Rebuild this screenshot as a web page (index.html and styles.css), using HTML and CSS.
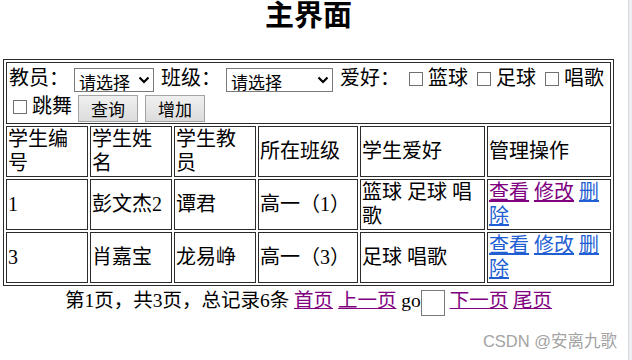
FILE: index.html
```html
<!DOCTYPE html>
<html lang="zh-CN">
<head>
  <meta charset="UTF-8">
  <meta name="viewport" content="width=device-width, initial-scale=1.0">
  <title>主界面</title>
  <link rel="stylesheet" href="styles.css">
</head>
<body>
  <div class="page">
    <h1 class="title">主界面</h1>
    <table class="grid">
      <colgroup>
        <col class="c-id">
        <col class="c-name">
        <col class="c-teacher">
        <col class="c-class">
        <col class="c-hobby">
        <col class="c-ops">
      </colgroup>
      <tr>
        <td colspan="6" class="filter">
          教员：<span class="pick pick-teacher"><select><option>请选择</option></select><svg class="chev" viewBox="0 0 12 8"><path d="M1.5 1.5 L6 6 L10.5 1.5" /></svg></span>
          班级：<span class="pick pick-class"><select><option>请选择</option></select><svg class="chev" viewBox="0 0 12 8"><path d="M1.5 1.5 L6 6 L10.5 1.5" /></svg></span>
          爱好： <label><input type="checkbox" class="box"> 篮球</label>
          <label><input type="checkbox" class="box"> 足球</label>
          <label><input type="checkbox" class="box"> 唱歌</label><br>
          <label><input type="checkbox" class="box"> 跳舞</label>
          <button class="btn">查询</button>
          <button class="btn">增加</button>
        </td>
      </tr>
      <tr>
        <td>学生编号</td>
        <td>学生姓名</td>
        <td>学生教员</td>
        <td>所在班级</td>
        <td>学生爱好</td>
        <td>管理操作</td>
      </tr>
      <tr>
        <td>1</td>
        <td>彭文杰2</td>
        <td>谭君</td>
        <td>高一（1）</td>
        <td>篮球 足球 唱歌</td>
        <td><a href="#" class="seen">查看</a> <a href="#" class="seen">修改</a> <a href="#">删除</a></td>
      </tr>
      <tr>
        <td>3</td>
        <td>肖嘉宝</td>
        <td>龙易峥</td>
        <td>高一（3）</td>
        <td>足球 唱歌</td>
        <td><a href="#">查看</a> <a href="#">修改</a> <a href="#">删除</a></td>
      </tr>
    </table>
    <div class="pager">
      第1页，共3页，总记录6条 <a href="#">首页</a> <a href="#">上一页</a> go<input type="text" class="jump"> <a href="#">下一页</a> <a href="#">尾页</a>
    </div>
  </div>
  <div class="mark">CSDN @安离九歌</div>
  <div class="scrollbar"></div>
</body>
</html>
```

FILE: styles.css
```css
body {
  margin: 0;
  font-family: "Liberation Serif", "Noto Sans CJK SC", serif;
  font-size: 20px;
  color: #000;
  background: #fff;
}
.page {
  width: 611px;
  margin-left: 3px;
}
.title {
  margin: 0 0 27px;
  font-size: 29px;
  line-height: 32px;
  font-weight: bold;
  text-align: center;
}
.grid {
  width: 611px;
  table-layout: fixed;
  border: 1px solid #2b2b2b;
  border-spacing: 2px;
}
.grid td {
  border: 1px solid #2b2b2b;
  padding: 1px;
  line-height: 23.5px;
  vertical-align: middle;
}
.c-id { width: 82px; }
.c-name { width: 82px; }
.c-teacher { width: 82px; }
.c-class { width: 100px; }
.c-hobby { width: 125px; }
.c-ops { width: 124px; }
.grid td.filter {
  line-height: 28px;
  padding: 1px 1px 1px 2px;
}
.pick {
  position: relative;
  display: inline-block;
  vertical-align: middle;
  margin: 0 2px 0 5px;
}
.pick select {
  appearance: none;
  -webkit-appearance: none;
  display: block;
  height: 24px;
  padding: 0 0 0 4px;
  border: 1px solid #7a7a7a;
  border-radius: 0;
  background: #fff;
  font-family: "Noto Sans CJK SC", sans-serif;
  font-size: 17px;
  color: #000;
}
.pick-teacher select { width: 80px; }
.pick-class select { width: 107px; }
.chev {
  position: absolute;
  right: 4px;
  top: 8px;
  width: 12px;
  height: 8px;
  fill: none;
  stroke: #000;
  stroke-width: 2.2;
}
.box {
  appearance: none;
  -webkit-appearance: none;
  width: 14px;
  height: 14px;
  margin: 0 0 0 4px;
  border: 1px solid #707070;
  background: #fff;
  vertical-align: -1px;
}
.btn {
  width: 60px;
  height: 27px;
  margin: 0 1px;
  padding: 0;
  border: 1px solid #a3a3a3;
  background: linear-gradient(#f0f0f0, #dcdcdc);
  font-family: "Noto Sans CJK SC", sans-serif;
  font-size: 17px;
  color: #000;
  vertical-align: middle;
}
a {
  color: #1f5fd3;
}
a.seen {
  color: #800080;
}
.pager {
  text-align: center;
  font-size: 19.5px;
  line-height: 28px;
  margin-top: 1px;
}
.pager a {
  color: #800080;
}
.jump {
  width: 24px;
  height: 26px;
  box-sizing: border-box;
  margin: 0;
  padding: 0;
  border: 1px solid #7a7a7a;
  vertical-align: middle;
}
.mark {
  position: absolute;
  right: 15px;
  bottom: 8px;
  font-family: "Liberation Sans", "Noto Sans CJK SC", sans-serif;
  font-size: 16.5px;
  color: #a3a3a3;
}
.scrollbar {
  position: fixed;
  top: 0;
  right: 0;
  bottom: 0;
  width: 3px;
  border-left: 1px solid #d6dae1;
  background: #eceef2;
}
```
